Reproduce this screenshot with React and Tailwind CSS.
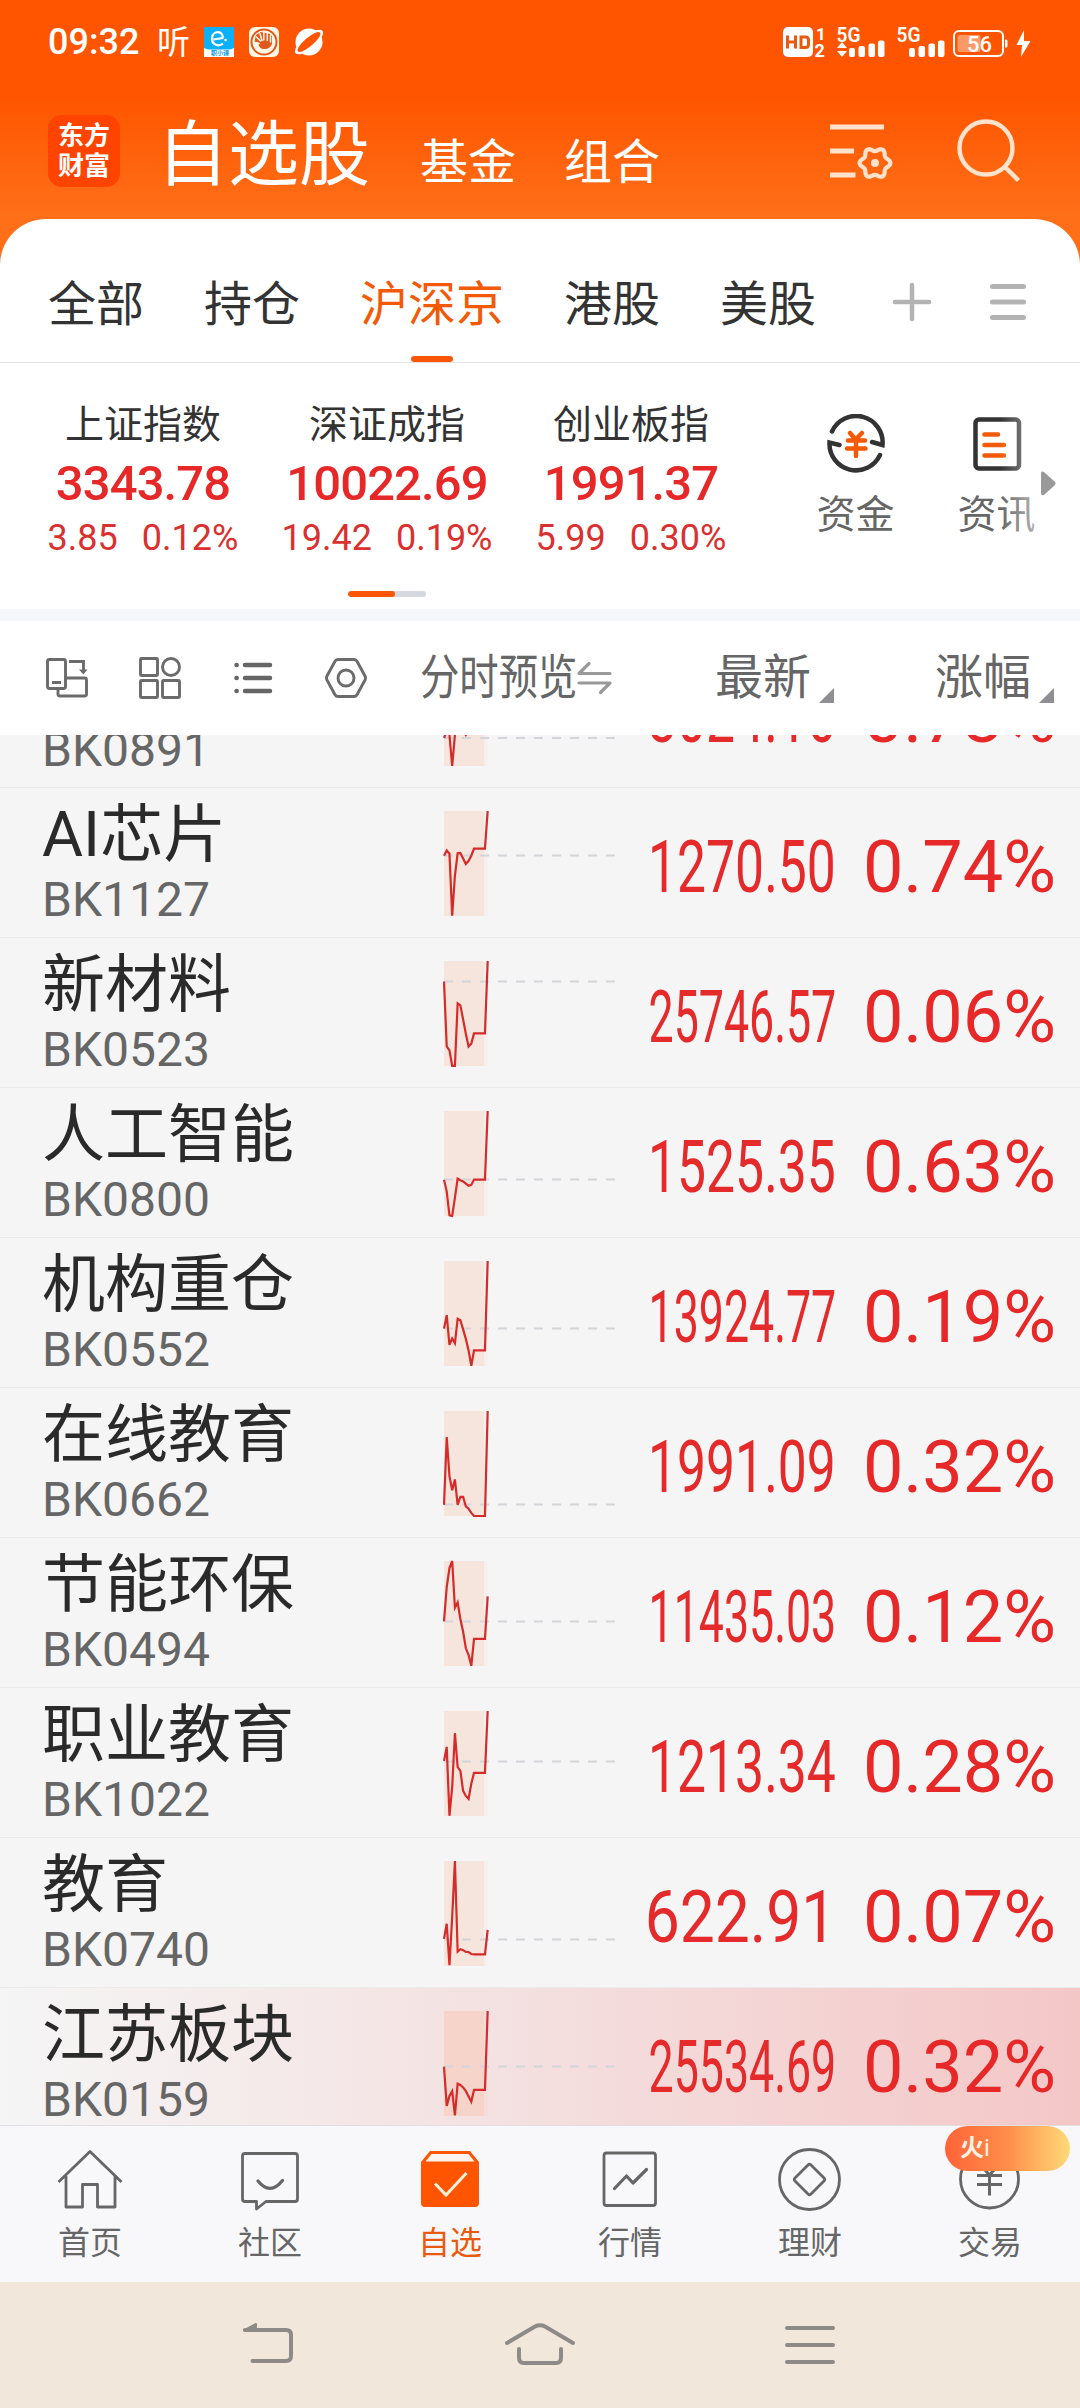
import React from 'react'

const tabs = ['全部', '持仓', '沪深京', '港股', '美股']

const indexes = [
  { name: '上证指数', value: '3343.78', diff: '3.85', rate: '0.12%' },
  { name: '深证成指', value: '10022.69', diff: '19.42', rate: '0.19%' },
  { name: '创业板指', value: '1991.37', diff: '5.99', rate: '0.30%' },
]

const stocks = [
  { name: '华为概念', code: 'BK0891', price: '3024.16', rate: '0.73%', base: 77, line: [77, 70, 74, 105, 74, 66, 66, 70, 74, 70, 64, 58, 58, 58, 58, 58, 0] },
  { name: 'AI芯片', code: 'BK1127', price: '1270.50', rate: '0.74%', base: 44.5, line: [44.7, 39.5, 42.7, 104.8, 64.5, 42.3, 41.9, 47.4, 53, 49.8, 44.7, 37.6, 37.6, 37.6, 37.6, 37.6, 0] },
  { name: '新材料', code: 'BK0523', price: '25746.57', rate: '0.06%', base: 20.5, line: [20.5, 85.4, 89.4, 104.8, 104.8, 42.3, 44.3, 58.5, 72.8, 85.4, 82.6, 72.4, 72.4, 72.4, 72.4, 72.4, 0] },
  { name: '人工智能', code: 'BK0800', price: '1525.35', rate: '0.63%', base: 68.5, line: [68.8, 80.6, 104.4, 105, 86.6, 67.6, 69.2, 70.4, 72.7, 74.7, 73.9, 68.6, 68.6, 68.6, 68.6, 68.6, 0] },
  { name: '机构重仓', code: 'BK0552', price: '13924.77', rate: '0.19%', base: 67.5, line: [67.6, 54.2, 83.8, 77.5, 82.2, 57.7, 59.3, 68.4, 77.9, 89.4, 104.8, 89.4, 89.4, 89.4, 89.4, 89.4, 0] },
  { name: '在线教育', code: 'BK0662', price: '1991.09', rate: '0.32%', base: 93.5, line: [93.9, 26, 65.1, 79.3, 68.4, 93.9, 85.9, 85.9, 95.3, 97.7, 101.9, 105, 105, 105, 105, 105, 0] },
  { name: '节能环保', code: 'BK0494', price: '11435.03', rate: '0.12%', base: 60.5, line: [60.4, 26, 7.1, 0, 46.7, 41.5, 58, 70.8, 87.3, 93.9, 104.8, 77.9, 77.9, 77.9, 77.9, 77.9, 35.4] },
  { name: '职业教育', code: 'BK1022', price: '1213.34', rate: '0.28%', base: 50.5, line: [50, 35.9, 104.8, 76, 22.2, 56.2, 59.9, 79.8, 84.9, 87.8, 72.7, 61.8, 61.8, 61.8, 61.8, 61.8, 0] },
  { name: '教育', code: 'BK0740', price: '622.91', rate: '0.07%', base: 78.5, line: [77.9, 62.8, 104.3, 55.7, 0, 90.6, 88.2, 89.2, 91, 91, 93, 93.4, 93.4, 93.4, 93.4, 93.4, 68.9] },
  { name: '江苏板块', code: 'BK0159', price: '25534.69', rate: '0.32%', base: 55.5, active: true, line: [55.7, 94.9, 84.9, 80.2, 104.3, 72.7, 74, 76.4, 80.2, 85.4, 90.6, 78.8, 78.8, 78.8, 78.8, 78.8, 0] },
]

// longer prices are squeezed into the same column
const squeeze = {
  6: 'scale-x-[0.866]',
  7: 'scale-x-[0.717]',
  8: 'scale-x-[0.621]',
}

// six-lobed gear outline around 45,41
const gear = Array.from({ length: 72 }, (_, i) => {
  const a = (i * Math.PI) / 36
  const r = 13.6 + 1.8 * Math.cos(6 * a)
  return `${(45 + r * Math.cos(a)).toFixed(2)},${(41 + r * Math.sin(a)).toFixed(2)}`
}).join(' ')

function Signal({ arrows }) {
  return (
    <svg className="overflow-visible" width="48" height="30" viewBox="0 0 48 30" fill="#fff">
      <text x="-0.5" y="15" fontSize="21" fontWeight="600" fontFamily="Roboto" textLength="24" lengthAdjust="spacingAndGlyphs">5G</text>
      {arrows && <path d="M5 15l5 6H0zM5 30l5-6H0z" />}
      <rect x="12" y="21" width="6" height="9" rx="2" />
      <rect x="21.5" y="19" width="6.5" height="11" rx="2" />
      <rect x="31.5" y="16.500" width="6.500" height="13.500" rx="2" />
      <rect x="41" y="13.500" width="6.500" height="16.500" rx="2" />
    </svg>
  )
}

function StatusBar() {
  return (
    <div className="flex h-[84px] items-start pt-[27px] text-white">
      <span className="ml-[48px] w-[91px] text-[36px] leading-[31px] font-medium">09:32</span>
      <span className="ml-[18px] w-[32px] text-[33px] leading-[31px]">听</span>
      <svg className="ml-[15px] overflow-visible" width="30" height="30" viewBox="0 0 30 30">
        <rect width="30" height="30" fill="#0bb0fb" />
        <path d="M0 21q3 1.500 6 1.500h18q3 0 6-1.500v9H0z" fill="#fff" />
        <path d="M9.500 12.500l9-1.500c1.500-7-9.500-8.500-10.500 0c-.5 7 7 9 11 5.500" fill="none" stroke="#fff" strokeWidth="2.200" />
        <circle cx="21.500" cy="13" r="1.300" fill="#fff" />
        <text x="7" y="28" fontSize="6" fontWeight="700" fill="#0b9be0">职小课</text>
      </svg>
      <svg className="ml-[15px]" width="30" height="30" viewBox="0 0 30 30" fill="none">
        <rect width="30" height="30" rx="6" fill="#fff6e4" />
        <circle cx="15" cy="15" r="12.500" stroke="#e0591c" strokeWidth="2" />
        <path d="M5.500 14.500l4 1.500c0 4 2.500 6 6 6 4 0 6-2 7.500-5V9l-2-2-9-2L7 8z" fill="#e0591c" />
        <path d="M7.500 10l4 4M11 6.500l2 7M14.800 5v8M18.300 5.500v8M21.500 8v7M7 15.500l3 1" stroke="#fff6e4" strokeWidth="1.500" strokeLinecap="round" />
      </svg>
      <svg className="ml-[15px]" width="30" height="30" viewBox="0 0 30 30">
        <circle cx="15" cy="15" r="13.500" fill="#fff" />
        <g transform="rotate(-40 15 15)">
          <ellipse cx="15" cy="15" rx="17.500" ry="6.500" fill="#fff" />
          <ellipse cx="15" cy="15" rx="14.500" ry="4.300" fill="#ff5500" />
        </g>
      </svg>
      <svg className="ml-[459px] overflow-visible" width="43" height="30" viewBox="0 0 43 30">
        <rect width="30" height="30" rx="5" fill="#fff" />
        <path d="M4.500 8.500v13M12.500 8.500v13M4.500 15h8M18 10h4.500q3 0 3 3v4.500q0 3-3 3H18z" fill="none" stroke="#e85a10" strokeWidth="3" />
        <text x="33" y="12.500" fontSize="17" fontWeight="700" fontFamily="Roboto" fill="#fff">1</text>
        <text x="31.500" y="29.500" fontSize="18" fontWeight="700" fontFamily="Roboto" fill="#fff">2</text>
      </svg>
      <div className="ml-[11px] flex gap-[12px]">
        <Signal arrows />
        <Signal />
      </div>
      <svg className="ml-[8px]" width="80" height="30" viewBox="0 0 80 30">
        <rect x="1" y="4" width="49" height="25" rx="5" fill="none" stroke="#fff" strokeWidth="2" />
        <rect x="4.500" y="8" width="23" height="17" rx="2" fill="#fff" opacity=".4" />
        <path d="M52 12.500h1q1.500 0 1.500 1.500v5q0 1.500-1.500 1.500h-1z" fill="#fff" />
        <text x="26.500" y="24.500" fontSize="22" fontWeight="500" fontFamily="Roboto" textAnchor="middle" fill="#fff">56</text>
        <path d="M71 3L63.500 18H69l-1 12 9.500-16H71z" fill="#fff" />
      </svg>
    </div>
  )
}

function Header() {
  return (
    <div className="flex h-[135px] items-start text-white">
      <div className="mt-[31px] ml-[48px] flex h-[72px] w-[72px] flex-col items-center justify-center rounded-[14px] bg-[#ff4400] text-[26px] leading-[30px] font-bold">
        <span>东方</span>
        <span>财富</span>
      </div>
      <div className="mt-[35px] ml-[37px] flex items-baseline">
        <span className="w-[213px] text-[71px] leading-[72px]">自选股</span>
        <span className="ml-[50px] text-[48px] leading-[48px]">基金</span>
        <span className="ml-[48px] text-[48px] leading-[48px]">组合</span>
      </div>
      <svg className="mt-[38px] ml-[170px]" width="64" height="64" viewBox="0 0 64 64" fill="none" stroke="#ffe2cc" strokeWidth="5">
        <path d="M0 5h54M0 29h24M0 53h25.500" />
        <polygon strokeWidth="4.200" strokeLinejoin="round" points={gear} />
        <circle cx="45" cy="41" r="4" fill="#ffe2cc" stroke="none" />
      </svg>
      <svg className="mt-[34px] ml-[62px]" width="66" height="66" viewBox="0 0 66 66" fill="none" stroke="#ffe2cc" strokeWidth="4.500">
        <circle cx="30" cy="30" r="26.500" />
        <path d="M49 49l13.500 13.500" />
      </svg>
    </div>
  )
}

function Tabs() {
  return (
    <div className="flex h-[144px] items-center border-b border-[#e4e4e4] pt-[28px] text-[#333]">
      <div className="ml-[48px] flex gap-[60px] text-[48px] leading-[115px]">
        {tabs.map((t) => (
          <div key={t} className={t === '沪深京' ? 'relative text-[#f35a08]' : 'relative'}>
            {t}
            {t === '沪深京' && <div className="absolute bottom-0 left-1/2 h-[6px] w-[42px] -translate-x-1/2 rounded-full bg-[#fb5607]" />}
          </div>
        ))}
      </div>
      <svg className="-mt-[5px] ml-[76px]" width="40" height="40" viewBox="0 0 40 40" stroke="#b3b3b3" strokeWidth="4.500" strokeLinecap="round">
        <path d="M3 20h34M20 3v34" />
      </svg>
      <svg className="-mt-[5px] ml-[56px]" width="40" height="40" viewBox="0 0 40 40" stroke="#b3b3b3" strokeWidth="5" strokeLinecap="round">
        <path d="M4.500 4.500h31M4.500 20h31M4.500 35.500h31" />
      </svg>
    </div>
  )
}

function Indexes() {
  return (
    <div className="relative flex h-[246px]">
      <div className="ml-[21px] w-[732px] pt-[39px]">
        <div className="grid grid-cols-3 text-center">
          {indexes.map((i) => (
            <div key={i.name}>
              <div className="text-[39px] leading-[46px] text-[#333]">{i.name}</div>
              <div className="text-[49px] leading-[71px] font-medium tracking-[-0.9px] text-[#e62828]">{i.value}</div>
              <div className="flex justify-center gap-[24px] text-[36px] leading-[38px] text-[#d93030]">
                <span>{i.diff}</span>
                <span>{i.rate}</span>
              </div>
            </div>
          ))}
        </div>
        <div className="mx-auto mt-[34px] h-[6px] w-[78px] overflow-hidden rounded-full bg-[#d5d8dc]">
          <div className="h-full w-[47px] rounded-full bg-[#fb5607]" />
        </div>
      </div>
      <div className="ml-[32px] flex pt-[51px] text-[39px] text-[#666]">
        <div className="flex w-[141px] flex-col items-center">
          <svg width="60" height="60" viewBox="0 0 60 60" fill="none" stroke="#333" strokeWidth="4.500">
            <path strokeLinecap="round" d="M6 17.500A26.500 26.500 0 0 1 56.500 31L46 28" />
            <path strokeLinecap="round" d="M54 41A26.500 26.500 0 0 1 3.500 28.500L13.500 31" />
            <path stroke="#f35a08" strokeLinecap="round" d="M24 19l5.500 6.500L36 19M22 26.500h17M21 34.500h18.500M30 26.500v15.500" />
          </svg>
          <span className="mt-[18px] leading-[46px]">资金</span>
        </div>
        <div className="flex w-[141px] flex-col items-center">
          <svg width="60" height="60" viewBox="0 0 60 60" fill="none" strokeWidth="4.500">
            <rect x="8.500" y="5.500" width="43.500" height="49" rx="3.500" stroke="#333" />
            <path stroke="#f35a08" strokeLinecap="round" d="M17.500 20.500h13.500M17.500 31h19.500M17.500 41.500h19.500" />
          </svg>
          <span className="mt-[18px] leading-[46px]">资讯</span>
        </div>
      </div>
      <div className="absolute top-[40px] left-[1000px] h-[140px] w-[50px] bg-linear-to-r from-white/0 to-white/70" />
      <svg className="absolute top-[108px] left-[1041px]" width="15" height="25" viewBox="0 0 15 25" fill="#999">
        <path d="M0 3q0-4 3.500-1.500l10 9q2 2 0 4l-10 9Q0 25.500 0 22z" />
      </svg>
    </div>
  )
}

function SortMark() {
  return (
    <svg className="mb-[32px] ml-[8px] self-end" width="15" height="15" viewBox="0 0 15 15" fill="#8e8e94">
      <path d="M15 0v15H0z" />
    </svg>
  )
}

function Toolbar() {
  return (
    <div className="flex h-[114px] items-center bg-white text-[48px] leading-[48px] text-[#666]">
      <div className="ml-[46px] flex gap-[51px]">
        <svg width="42" height="42" viewBox="0 0 42 42" fill="none" stroke="#6b6b6b" strokeWidth="2.900">
          <rect x="1.500" y="2.500" width="18" height="29" rx="2" />
          <path d="M6 25.500h9M23 4.500h14.500V14M20 21h18.500q2 0 2 2v14q0 2-2 2H14q-2 0-2-2v-6" />
          <path d="M33 12.500h8.500l-4.200 5z" fill="#6b6b6b" stroke="none" />
        </svg>
        <svg width="42" height="42" viewBox="0 0 42 42" fill="none" stroke="#6b6b6b" strokeWidth="2.900">
          <rect x="1.500" y="1.500" width="17" height="17" rx="1" />
          <circle cx="32" cy="10" r="8.500" />
          <rect x="1.500" y="23.500" width="17" height="17" rx="1" />
          <rect x="23.500" y="23.500" width="17" height="17" rx="1" />
        </svg>
        <svg width="42" height="42" viewBox="0 0 42 42" fill="none" stroke="#666" strokeWidth="4.500" strokeLinecap="round">
          <path d="M4.500 8h.2M4.500 21h.2M4.500 34h.2M13 8h25M13 21h25M13 34h25" />
        </svg>
        <svg width="42" height="42" viewBox="0 0 42 42" fill="none" stroke="#6b6b6b" strokeWidth="2.900" strokeLinejoin="round">
          <path d="M13 2.500h16q2 0 3 1.800l8 14.700q1 2 0 4l-8 14.700q-1 1.800-3 1.800H13q-2 0-3-1.800L2 23q-1-2 0-4l8-14.700q1-1.800 3-1.800z" />
          <circle cx="21" cy="21" r="8" />
        </svg>
      </div>
      <div className="ml-[53px] w-[158px]">
        <span className="inline-block origin-left scale-x-[0.82] whitespace-nowrap">分时预览</span>
      </div>
      <svg className="-ml-[1px]" width="35" height="34" viewBox="0 0 35 34" fill="none" stroke="#999" strokeWidth="3.200" strokeLinecap="round" strokeLinejoin="round">
        <path d="M33 12.500H2L12 2.500M2 22h31L23.500 31.500" />
      </svg>
      <span className="ml-[103px]">最新</span>
      <SortMark />
      <span className="ml-[101px]">涨幅</span>
      <SortMark />
    </div>
  )
}

function Spark({ line, base, active }) {
  const points = line.map((y, i) => `${1 + i * 2.73},${y + 1}`).join(' ')
  return (
    <svg className="mt-[22px] shrink-0" width="172" height="108" viewBox="0 0 172 108" fill="none">
      <rect x="1" y="1" width="40" height="105" fill={active ? '#f6d4ca' : '#f6e5dd'} />
      <rect x="41" y="1" width="3.500" height="105" fill={active ? '#f5dcd8' : '#f6efec'} />
      <path d={`M1 ${base + 1}h171`} stroke="#d3d5da" strokeWidth="2" strokeDasharray="9 9" />
      <polyline points={points} stroke="#d32c2b" strokeWidth="2.200" />
    </svg>
  )
}

function StockRow({ stock }) {
  return (
    <div className={stock.active ? 'flex h-[150px] shrink-0 border-b border-[#ebebeb] bg-linear-to-r from-[#f5f5f5] via-[#f4dfdf] to-[#f4c7c7]' : 'flex h-[150px] shrink-0 border-b border-[#ebebeb]'}>
      <div className="ml-[42px] w-[401px] shrink-0 pt-[14px]">
        <div className="text-[63px] leading-[66px] text-[#2a2a2a]">{stock.name}</div>
        <div className="text-[48px] leading-[63px] text-[#666]">{stock.code}</div>
      </div>
      <Spark line={stock.line} base={stock.base} active={stock.active} />
      <div className="mt-[5px] flex w-[221px] shrink-0 justify-end text-[72px] leading-[149px] text-[#e42a2a]">
        <span className={`shrink-0 origin-right ${squeeze[stock.price.length]}`}>{stock.price}</span>
      </div>
      <div className="mt-[5px] w-[220px] shrink-0 text-right text-[72px] leading-[149px] text-[#e62828]">{stock.rate}</div>
    </div>
  )
}

function NavItem({ label, active, children }) {
  return (
    <div className={active ? 'relative flex flex-1 flex-col items-center text-[#e85a10]' : 'relative flex flex-1 flex-col items-center text-[#666]'}>
      <svg className="mt-[20px]" width="66" height="66" viewBox="0 0 66 66" fill="none" stroke="currentColor" strokeWidth="2.800" strokeLinejoin="round">
        {children}
      </svg>
      <span className="mt-[12px] text-[32px] leading-[38px]">{label}</span>
    </div>
  )
}

function BottomNav() {
  return (
    <div className="flex h-[157px] border-t border-[#e0dfe2] bg-[#f8f8fb]">
      <NavItem label="首页">
        <path d="M1.500 36L33 5.500 64.500 36M9 30v31h16.500V38.500h15V61H58V30" />
      </NavItem>
      <NavItem label="社区">
        <path d="M8 7.500h50q2.500 0 2.500 2.500v43q0 2.500-2.500 2.500H29L19.500 63v-7.500H8Q5.500 55.500 5.500 53V10Q5.500 7.500 8 7.500z" />
        <path d="M21 35Q33 50 45.500 34.500" strokeWidth="3.300" strokeLinecap="round" />
      </NavItem>
      <NavItem label="自选" active>
        <path d="M4 16L13 5h40l9 11v41q0 4-4 4H8q-4 0-4-4z" fill="#ff5500" stroke="none" />
        <path d="M14.500 8h37l6 7.500H8.500z" fill="#fdf3ee" stroke="none" />
        <path d="M18 37.500L29 49 49.500 27" stroke="#fff0dc" strokeWidth="3" strokeLinejoin="miter" />
      </NavItem>
      <NavItem label="行情">
        <rect x="7" y="7" width="51.500" height="52.500" rx="2.500" />
        <path d="M17.500 42.500L29.500 30l6.500 7L49.500 23.500" strokeLinecap="round" strokeWidth="3.200" />
      </NavItem>
      <NavItem label="理财">
        <circle cx="32.500" cy="33.500" r="30" />
        <path d="M31 19q1.500-1.500 3 0l13 13q1.500 1.500 0 3L34 48q-1.500 1.500-3 0L18 35q-1.500-1.500 0-3z" />
      </NavItem>
      <div className="relative flex flex-1">
        <NavItem label="交易">
          <circle cx="32.500" cy="33" r="29" />
          <path d="M23.500 19l9 10 9-10M20 29.500h25M20 38.500h25M32.500 29v20.500" strokeWidth="3" />
        </NavItem>
        <div className="absolute top-0 left-[45px] h-[45px] w-[125px] rounded-full bg-linear-to-r from-[#ff6338] via-[#ff8d4a] to-[#ffda78] pl-[15px] text-[24px] leading-[45px] font-bold text-[#fff3e6]">
          火<span className="font-normal">i</span>
        </div>
      </div>
    </div>
  )
}

function SystemNav() {
  return (
    <div className="flex h-[126px] items-start bg-[#f1e7db]">
      <svg className="mt-[39px] ml-[241px]" width="54" height="48" viewBox="0 0 54 48" fill="none" stroke="#8e8b86" strokeWidth="4" strokeLinecap="round">
        <path d="M4 9h41q5 0 5 5v21q0 5-5 5H11.500" />
        <path d="M3 9.500L15 3v6z" fill="#8e8b86" strokeWidth="2" strokeLinejoin="round" />
      </svg>
      <svg className="mt-[39px] ml-[209px]" width="72" height="50" viewBox="0 0 72 50" fill="none" stroke="#8e8b86" strokeWidth="4" strokeLinecap="round">
        <path d="M3 22L31 5.500q5-2.500 10 0L69 22M15 28v9q0 5 5 5h32q5 0 5-5v-9" />
      </svg>
      <svg className="mt-[38px] ml-[209px]" width="50" height="48" viewBox="0 0 50 48" stroke="#8e8b86" strokeWidth="4" strokeLinecap="round">
        <path d="M2 8h46M2 25h46M2 42h46" />
      </svg>
    </div>
  )
}

export default function App() {
  return (
    <div className="flex h-[2408px] w-[1080px] flex-col overflow-hidden bg-[#f5f5f5] font-[Roboto,'Noto_Sans_CJK_SC',sans-serif]">
      <div className="h-[270px] shrink-0 bg-[linear-gradient(180deg,#ff5500_0px,#ff5500_96px,#ff6f18_215px)]">
        <StatusBar />
        <Header />
      </div>
      <div className="-mt-[51px] shrink-0 rounded-t-[46px] bg-white">
        <Tabs />
        <Indexes />
      </div>
      <div className="h-[12px] shrink-0 bg-[#f6f7fa]" />
      <div className="shrink-0">
        <Toolbar />
      </div>
      <div className="h-[1390px] shrink-0 overflow-hidden">
        <div className="-mt-[97px] flex flex-col">
          {stocks.map((s) => (
            <StockRow key={s.code} stock={s} />
          ))}
        </div>
      </div>
      <div className="shrink-0">
        <BottomNav />
        <SystemNav />
      </div>
    </div>
  )
}
